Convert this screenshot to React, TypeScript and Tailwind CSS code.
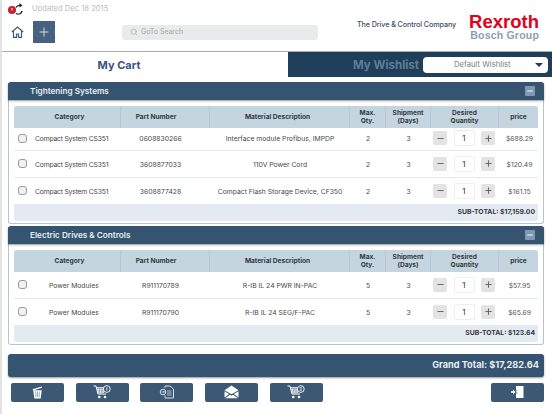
import React from "react";
import { Search, Plus, Minus } from "lucide-react";

const cols = "grid grid-cols-[107px_89px_140px_36px_45px_68px_39px]";

function QtyBtn({ kind }: { kind: "minus" | "plus" }) {
  const I = kind === "minus" ? Minus : Plus;
  return (
    <div className="w-[14px] h-[14px] bg-[#e3e3e3] rounded-[2px] flex items-center justify-center text-[#6a6a6a]">
      <I size={9} strokeWidth={3} />
    </div>
  );
}

type Row = { cat: string; part: string; desc: string; max: string; ship: string; price: string; indent?: boolean };

function TableRow({ r, tall }: { r: Row; tall: boolean }) {
  return (
    <div className={`${cols} items-center text-[6.8px] text-[#4a4a4a] border-b border-[#e4eaf0] bg-white ${tall ? "h-[27px]" : "h-[23px] pb-[1px]"}`}>
      <div className="flex items-center">
        <div className="ml-[4px] w-[9px] h-[9px] rounded-[3px] border border-[#9a9a9a] bg-[#f1f1f1] shrink-0" />
        <div className={`pt-[3px] whitespace-nowrap ${r.indent ? "ml-[22px]" : "ml-[8px] tracking-[-0.2px]"}`}>{r.cat}</div>
      </div>
      <div className="text-center pt-[3px] pr-[10px]">{r.part}</div>
      <div className="text-center pt-[3px] whitespace-nowrap">{r.desc}</div>
      <div className="text-center pt-[3px]">{r.max}</div>
      <div className="text-center pt-[3px]">{r.ship}</div>
      <div className="flex items-center justify-between pl-[2px] pr-[4px]">
        <QtyBtn kind="minus" />
        <div className="w-[21px] h-[16px] bg-white border border-[#eeeeee] rounded-[2px] flex items-center justify-center text-[8px] text-[#333]">1</div>
        <QtyBtn kind="plus" />
      </div>
      <div className="text-center pt-[3px] pl-[2px] text-[#555]">{r.price}</div>
    </div>
  );
}

const headerCells: { lines: string[]; cls: string }[] = [
  { lines: ["Category"], cls: "pl-[5px]" },
  { lines: ["Part Number"], cls: "pr-[18px]" },
  { lines: ["Material Description"], cls: "pr-[4px]" },
  { lines: ["Max.", "Qty."], cls: "" },
  { lines: ["Shipment", "(Days)"], cls: "" },
  { lines: ["Desired", "Quantity"], cls: "" },
  { lines: ["price"], cls: "" },
];

function Section({ title, rows, total, firstShort }: { title: string; rows: Row[]; total: string; firstShort?: boolean }) {
  return (
    <section className="mx-[8px] bg-white rounded-[3px] border border-t-0 border-[#b9c3d3]">
      <div className="h-[18px] -mx-px bg-[#345470] rounded-t-[3px] flex items-center justify-between pl-[22px] pr-[9px] shadow-[0_1px_2px_rgba(0,0,0,0.4)]">
        <span className="text-[8.2px] font-semibold text-[#e8eef3]">{title}</span>
        <span className="w-[10px] h-[10px] bg-[#7f98ae] rounded-[1px] flex items-center justify-center text-white">
          <Minus size={8} strokeWidth={3} />
        </span>
      </div>
      <div className="px-[5px] pt-[6px] pb-[2px]">
        <div className={`${cols} h-[21.5px] bg-[#c5d5e0] rounded-t-[3px] text-[6.6px] font-bold text-[#33383d] leading-[8px]`}>
          {headerCells.map((c, i) => (
            <div key={i} className={`flex flex-col items-center justify-center whitespace-nowrap ${c.cls} ${i < 6 ? "border-r border-[#b5c6d3]" : ""}`}>
              {c.lines.map((l) => (
                <span key={l}>{l}</span>
              ))}
            </div>
          ))}
        </div>
        {rows.map((r, i) => (
          <TableRow key={i} r={r} tall={!(firstShort && i === 0)} />
        ))}
        <div className="h-[16px] bg-[#e3eaf1] rounded-b-[3px] flex items-center justify-end pr-[3px] text-[6.8px] font-bold text-[#33383d]">
          {total}
        </div>
      </div>
    </section>
  );
}

function CartIcon({ mark }: { mark: string }) {
  return (
    <svg width="18" height="14" viewBox="0 0 18 14" fill="none" stroke="#fff">
      <path d="M0.5 1h2.5l2 8h8" strokeWidth="1" />
      <path d="M3.2 2.5h8.8M3.6 4.3h8M4 6.1h7.5M4.4 7.8h6.5M5 2.5l1 5.3M7 2.5l.5 5.3M9 2.5v5.3M11 2.5l-.4 5.3" strokeWidth="0.7" />
      <circle cx="6.3" cy="12" r="1.3" fill="#fff" stroke="none" />
      <circle cx="12" cy="12" r="1.3" fill="#fff" stroke="none" />
      <circle cx="13.8" cy="4" r="3.4" fill="#3b5874" strokeWidth="0.9" />
      <path d={mark} strokeWidth="0.8" />
    </svg>
  );
}

function Trash() {
  return (
    <svg width="11" height="13" viewBox="0 0 11 13" fill="#fff">
      <path d="M1.3 4.2h8.4l-1 8.3H2.3z" />
      <path d="M.6 3.2L9.8.6l.3 1.2-9.2 2.6z" />
      <path d="M3.8 5.5v5.5M5.5 5.5v5.5M7.2 5.5v5.5" stroke="#3b5874" strokeWidth=".5" />
    </svg>
  );
}

function Doc() {
  return (
    <svg width="16" height="14" viewBox="0 0 16 14" fill="none" stroke="#e6ecf1" strokeWidth="0.9">
      <path d="M6 3V1h5l3.5 3v9H6v-2.5" />
      <path d="M8 6h4.5M8 8h4.5M8 10h4.5" strokeWidth="0.7" />
      <circle cx="4" cy="7" r="2.8" />
      <path d="M2.5 7h3M4.3 5.8L5.5 7 4.3 8.2" strokeWidth="0.7" />
    </svg>
  );
}

function Mail() {
  return (
    <svg width="15" height="14" viewBox="0 0 15 14" fill="#fff">
      <path d="M7.5.5L14.5 5.2 7.5 9.3.5 5.2z" />
      <path d="M.5 6.3l4.6 2.8L.5 12.5zM14.5 6.3L9.9 9.1l4.6 3.4zM1 13.3L6 9.8l1.5.9 1.5-.9 5 3.5z" />
    </svg>
  );
}

function Door() {
  return (
    <svg width="13" height="14" viewBox="0 0 13 14" fill="#fff">
      <path d="M5 1h7.5v12H5V8.5h1.3V7.5H5V6.3h1.3V5.5H5z" />
      <path d="M0 6.2h2V4.6L4.6 7 2 9.4V7.8H0z" />
    </svg>
  );
}

function Btn({ children }: { children: React.ReactNode }) {
  return <button className="w-[53px] h-[19.5px] bg-[#3b5874] rounded-[2px] flex items-center justify-center text-white">{children}</button>;
}

const a: Row[] = [
  { cat: "Compact System CS351", part: "0608830266", desc: "Interface module Profibus, IMPDP", max: "2", ship: "3", price: "$688.29" },
  { cat: "Compact System CS351", part: "3608877033", desc: "110V Power Cord", max: "2", ship: "3", price: "$120.49" },
  { cat: "Compact System CS351", part: "3608877428", desc: "Compact Flash Storage Device, CF350", max: "2", ship: "3", price: "$161.15" },
];
const b: Row[] = [
  { cat: "Power Modules", part: "R911170789", desc: "R-IB IL 24 PWR IN-PAC", max: "5", ship: "3", price: "$57.95", indent: true },
  { cat: "Power Modules", part: "R911170790", desc: "R-IB IL 24 SEG/F-PAC", max: "5", ship: "3", price: "$65.69", indent: true },
];

export default function App() {
  return (
    <div className="w-[552px] h-[414px] overflow-hidden bg-white border-l-2 border-[#e2e2e2] box-border font-['Inter',sans-serif]">
      <div className="w-[552px] -ml-[2px]">
        <header className="h-[52px] border-b-[1.5px] border-[#a9adb1] flex justify-between">
          <div className="pl-[7px] pt-[2px]">
            <div className="flex items-center gap-[8px] h-[14px]">
              <svg width="17" height="13" viewBox="0 0 17 13">
                <circle cx="5" cy="7" r="4" fill="#c8202f" />
                <path d="M5 5v2.5" stroke="#fff" strokeWidth="1" />
                <path d="M9 4.5c1-2 3-2.5 5-2M15 8c-.5 2.5-3 4-6 2.5" stroke="#222" strokeWidth="1.3" fill="none" />
                <path d="M12.5 0l3 2.5-3 2z" fill="#222" />
              </svg>
              <span className="text-[7.6px] text-[#bcbcbc]">Updated Dec 18 2015</span>
            </div>
            <div className="flex items-center mt-[5px] ml-[4px]">
              <svg width="13" height="12" viewBox="0 0 13 12" fill="none" stroke="#3f5c78" strokeWidth="1.2">
                <path d="M.8 6L6.5 1l5.7 5" />
                <path d="M2.5 5v6.3h3V8h2v3.3h3V5" />
              </svg>
              <div className="ml-[9px] w-[22px] h-[22px] bg-[#466280] flex items-center justify-center text-[#e8e8e8]">
                <Plus size={14} strokeWidth={1.5} />
              </div>
              <div className="ml-[67px] w-[196px] h-[15px] bg-[#e9eaeb] rounded-[3px] flex items-center pl-[8px] gap-[3px] text-[7px] text-[#a4a6a8]">
                <Search size={8} strokeWidth={2} />
                <span>GoTo Search</span>
              </div>
            </div>
          </div>
          <div className="flex items-center pr-[13px] pt-[3px]">
            <span className="text-[7.2px] font-medium text-[#3d5068] mr-[13px] mt-[-3px] whitespace-nowrap tracking-[-0.1px]">The Drive &amp; Control Company</span>
            <div className="flex flex-col items-end font-['Liberation_Sans',sans-serif]">
              <span className="text-[18.5px] font-bold text-[#e2001a] leading-[16px]">Rexroth</span>
              <span className="text-[10.5px] font-bold text-[#8ba0b5] leading-[11px] tracking-[0.2px]">Bosch Group</span>
            </div>
          </div>
        </header>
        <div className="flex h-[25px]">
          <div className="w-[288px] flex items-center justify-center text-[11px] font-bold text-[#3a5488] pr-[50px] pt-[2px]">My Cart</div>
          <div className="w-[264px] bg-[#1f3e5a] flex items-center pl-[65px]">
            <span className="text-[11.5px] font-bold text-[#627c95] whitespace-nowrap pt-[2px]">My Wishlist</span>
            <div className="ml-auto mr-[4px] w-[125px] h-[16px] bg-white rounded-[4px] flex items-center text-[7.7px] text-[#808080] pl-[31px]">
              <span>Default Wishlist</span>
              <svg className="ml-auto mr-[5px]" width="8" height="4" viewBox="0 0 8 4"><path d="M0 0h8L4 4z" fill="#1f3e5a" /></svg>
            </div>
          </div>
        </div>
        <div className="pt-[5px]">
          <Section title="Tightening Systems" rows={a} total="SUB-TOTAL: $17,159.00" firstShort />
          <div className="h-[2.5px]" />
          <Section title="Electric Drives & Controls" rows={b} total="SUB-TOTAL: $123.64" />
        </div>
        <div className="mx-[8px] mt-[9px] h-[23.5px] bg-[#345470] rounded-[3px] shadow-[0_1px_2px_rgba(0,0,0,0.4)] flex items-center justify-end pr-[5px] text-[9.2px] font-bold text-[#e8eef3]">
          Grand Total: $17,282.64
        </div>
        <div className="flex mt-[5.5px] pl-[11px] pr-[8px] gap-[11.7px]">
          <Btn><Trash /></Btn>
          <Btn><CartIcon mark="M13.8 2.2v3.6" /></Btn>
          <Btn><Doc /></Btn>
          <Btn><Mail /></Btn>
          <Btn><CartIcon mark="M12.8 2.6h2M12.8 4h2M12.8 5.4h2" /></Btn>
          <div className="flex-1" />
          <Btn><Door /></Btn>
        </div>
      </div>
    </div>
  );
}
